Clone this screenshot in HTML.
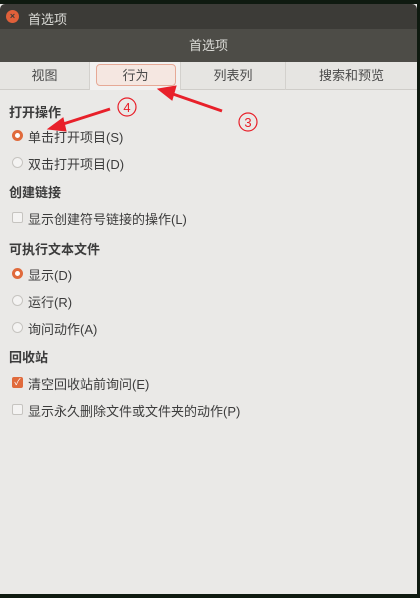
<!DOCTYPE html>
<html><head><meta charset="utf-8"><style>
*{margin:0;padding:0;box-sizing:border-box}
body{width:420px;height:598px;background:#0f1a10;position:relative;overflow:hidden;font-family:"Liberation Sans","Noto Sans CJK SC",sans-serif;font-size:13px;color:#3c3c3c}
.win{position:absolute;left:0;top:4px;width:417px;height:590px;background:#eae9e7}
.tb{position:absolute;left:0;top:0;width:417px;height:25px;background:#3c3b37;border-radius:5px 5px 0 0}
.close{position:absolute;left:6px;top:6px;width:13px;height:13px;border-radius:50%;background:#e0603a;color:#3c3b37;font-size:9px;line-height:13px;text-align:center;font-weight:bold}
.tt{position:absolute;left:28px;top:5px;color:#dcdcd8;font-size:13px}
.hd{position:absolute;left:0;top:25px;width:417px;height:33px;background:#4d4c47;color:#dcdcd8;text-align:center;line-height:33px;font-size:13px}
.tabs{position:absolute;left:0;top:58px;width:417px;height:28px;background:#e6e5e2;border-bottom:1px solid #cfcdc9}
.tab{position:absolute;top:0;height:28px;line-height:28px;text-align:center;border-right:1px solid #d3d1cd;color:#4a4a4a}
.sel{background:#f2f1f0}
.hl{position:absolute;left:96px;top:2px;width:80px;height:22px;border:1px solid #e6a996;border-radius:4px;background:#f5e7e1}
.h{position:absolute;left:9px;font-weight:bold;color:#3c3c3c}
.i{position:absolute;left:28px;color:#3c3c3c}
.r{position:absolute;left:12px;width:11px;height:11px;border-radius:50%;border:1px solid #c6c4c0;background:#f4f3f2}
.r.on{border:3px solid #e06a3c;background:#fff}
.c{position:absolute;left:12px;width:11px;height:11px;border:1px solid #c6c4c0;border-radius:2px;background:#f4f3f2}
.c.on{background:#e06a3c;border-color:#e06a3c;color:#fff;font-size:9px;line-height:9px;text-align:center}
</style></head><body>
<div class="win">
<div class="tb"><div class="close">×</div><div class="tt">首选项</div></div>
<div class="hd">首选项</div>
<div class="tabs">
<div class="tab" style="left:0;width:90px">视图</div>
<div class="tab sel" style="left:90px;width:91px"></div>
<div class="hl"></div>
<div class="tab" style="left:90px;width:91px;border:none">行为</div>
<div class="tab" style="left:181px;width:105px">列表列</div>
<div class="tab" style="left:286px;width:131px;border:none">搜索和预览</div>
</div>
</div>
<div class="h" style="top:102px">打开操作</div>
<div class="r on" style="top:130px"></div><div class="i" style="top:127px">单击打开项目(S)</div>
<div class="r" style="top:157px"></div><div class="i" style="top:154px">双击打开项目(D)</div>
<div class="h" style="top:182px">创建链接</div>
<div class="c" style="top:212px"></div><div class="i" style="top:209px">显示创建符号链接的操作(L)</div>
<div class="h" style="top:239px">可执行文本文件</div>
<div class="r on" style="top:268px"></div><div class="i" style="top:265px">显示(D)</div>
<div class="r" style="top:295px"></div><div class="i" style="top:292px">运行(R)</div>
<div class="r" style="top:322px"></div><div class="i" style="top:319px">询问动作(A)</div>
<div class="h" style="top:347px">回收站</div>
<div class="c on" style="top:377px">✓</div><div class="i" style="top:374px">清空回收站前询问(E)</div>
<div class="c" style="top:404px"></div><div class="i" style="top:401px">显示永久删除文件或文件夹的动作(P)</div>
<svg width="420" height="598" style="position:absolute;left:0;top:0">
<g stroke="#e8202a" fill="#e8202a">
<line x1="222" y1="111" x2="170" y2="93" stroke-width="3"/>
<polygon points="158,89 176,86 172,100"/>
<line x1="110" y1="109" x2="60" y2="125" stroke-width="3"/>
<polygon points="48,129 63,118 66,131"/>
</g>
<g fill="none" stroke="#e8202a" stroke-width="1.2">
<circle cx="127" cy="107" r="9"/><circle cx="248" cy="122" r="9"/>
</g>
<text x="127" y="112" font-size="13" fill="#e8202a" text-anchor="middle" font-family="Liberation Sans">4</text>
<text x="248" y="127" font-size="13" fill="#e8202a" text-anchor="middle" font-family="Liberation Sans">3</text>
</svg>
</body></html>
